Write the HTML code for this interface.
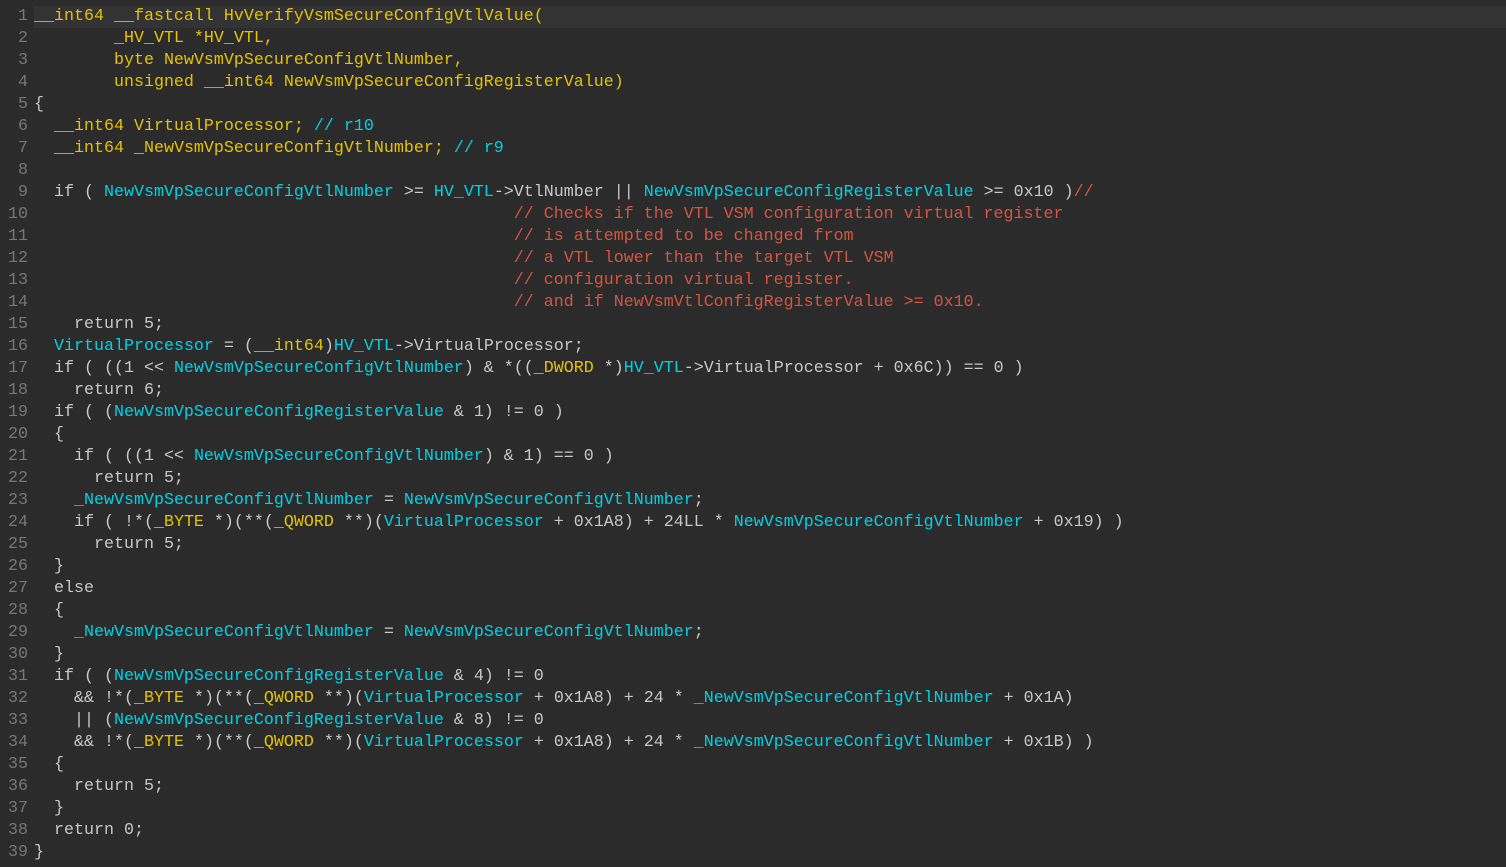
<!DOCTYPE html>
<html><head><meta charset="utf-8"><style>
html,body{margin:0;padding:0;background:#2b2b2b;width:1506px;height:867px;overflow:hidden}
#c{position:absolute;left:0;top:6px;font-family:"Liberation Mono",monospace;font-size:16.667px;line-height:22px;color:#c8c8c8}
.l{display:flex;height:22px;white-space:pre}
.n{width:28px;text-align:right;color:#777;padding-right:6px}
.t{flex:1;width:1472px;white-space:pre}
.h{background:#333333}
.y{color:#e6c300}
.c{color:#00d2e6}
.r{color:#d9533f}
</style></head><body><div id="c"><div class="l"><span class="n">1</span><span class="t h y">__int64 __fastcall HvVerifyVsmSecureConfigVtlValue(</span></div><div class="l"><span class="n">2</span><span class="t y">        _HV_VTL *HV_VTL,</span></div><div class="l"><span class="n">3</span><span class="t y">        byte NewVsmVpSecureConfigVtlNumber,</span></div><div class="l"><span class="n">4</span><span class="t y">        unsigned __int64 NewVsmVpSecureConfigRegisterValue)</span></div><div class="l"><span class="n">5</span><span class="t">{</span></div><div class="l"><span class="n">6</span><span class="t">  <span class="y">__int64 VirtualProcessor;</span> <span class="c">// r10</span></span></div><div class="l"><span class="n">7</span><span class="t">  <span class="y">__int64 _NewVsmVpSecureConfigVtlNumber;</span> <span class="c">// r9</span></span></div><div class="l"><span class="n">8</span><span class="t"></span></div><div class="l"><span class="n">9</span><span class="t">  if ( <span class="c">NewVsmVpSecureConfigVtlNumber</span> &gt;= <span class="c">HV_VTL</span>-&gt;VtlNumber || <span class="c">NewVsmVpSecureConfigRegisterValue</span> &gt;= 0x10 )<span class="r">//</span></span></div><div class="l"><span class="n">10</span><span class="t r">                                                // Checks if the VTL VSM configuration virtual register</span></div><div class="l"><span class="n">11</span><span class="t r">                                                // is attempted to be changed from</span></div><div class="l"><span class="n">12</span><span class="t r">                                                // a VTL lower than the target VTL VSM</span></div><div class="l"><span class="n">13</span><span class="t r">                                                // configuration virtual register.</span></div><div class="l"><span class="n">14</span><span class="t r">                                                // and if NewVsmVtlConfigRegisterValue &gt;= 0x10.</span></div><div class="l"><span class="n">15</span><span class="t">    return 5;</span></div><div class="l"><span class="n">16</span><span class="t">  <span class="c">VirtualProcessor</span> = (<span class="y">__int64</span>)<span class="c">HV_VTL</span>-&gt;VirtualProcessor;</span></div><div class="l"><span class="n">17</span><span class="t">  if ( ((1 &lt;&lt; <span class="c">NewVsmVpSecureConfigVtlNumber</span>) &amp; *((<span class="y">_DWORD</span> *)<span class="c">HV_VTL</span>-&gt;VirtualProcessor + 0x6C)) == 0 )</span></div><div class="l"><span class="n">18</span><span class="t">    return 6;</span></div><div class="l"><span class="n">19</span><span class="t">  if ( (<span class="c">NewVsmVpSecureConfigRegisterValue</span> &amp; 1) != 0 )</span></div><div class="l"><span class="n">20</span><span class="t">  {</span></div><div class="l"><span class="n">21</span><span class="t">    if ( ((1 &lt;&lt; <span class="c">NewVsmVpSecureConfigVtlNumber</span>) &amp; 1) == 0 )</span></div><div class="l"><span class="n">22</span><span class="t">      return 5;</span></div><div class="l"><span class="n">23</span><span class="t">    <span class="c">_NewVsmVpSecureConfigVtlNumber</span> = <span class="c">NewVsmVpSecureConfigVtlNumber</span>;</span></div><div class="l"><span class="n">24</span><span class="t">    if ( !*(<span class="y">_BYTE</span> *)(**(<span class="y">_QWORD</span> **)(<span class="c">VirtualProcessor</span> + 0x1A8) + 24LL * <span class="c">NewVsmVpSecureConfigVtlNumber</span> + 0x19) )</span></div><div class="l"><span class="n">25</span><span class="t">      return 5;</span></div><div class="l"><span class="n">26</span><span class="t">  }</span></div><div class="l"><span class="n">27</span><span class="t">  else</span></div><div class="l"><span class="n">28</span><span class="t">  {</span></div><div class="l"><span class="n">29</span><span class="t">    <span class="c">_NewVsmVpSecureConfigVtlNumber</span> = <span class="c">NewVsmVpSecureConfigVtlNumber</span>;</span></div><div class="l"><span class="n">30</span><span class="t">  }</span></div><div class="l"><span class="n">31</span><span class="t">  if ( (<span class="c">NewVsmVpSecureConfigRegisterValue</span> &amp; 4) != 0</span></div><div class="l"><span class="n">32</span><span class="t">    &amp;&amp; !*(<span class="y">_BYTE</span> *)(**(<span class="y">_QWORD</span> **)(<span class="c">VirtualProcessor</span> + 0x1A8) + 24 * <span class="c">_NewVsmVpSecureConfigVtlNumber</span> + 0x1A)</span></div><div class="l"><span class="n">33</span><span class="t">    || (<span class="c">NewVsmVpSecureConfigRegisterValue</span> &amp; 8) != 0</span></div><div class="l"><span class="n">34</span><span class="t">    &amp;&amp; !*(<span class="y">_BYTE</span> *)(**(<span class="y">_QWORD</span> **)(<span class="c">VirtualProcessor</span> + 0x1A8) + 24 * <span class="c">_NewVsmVpSecureConfigVtlNumber</span> + 0x1B) )</span></div><div class="l"><span class="n">35</span><span class="t">  {</span></div><div class="l"><span class="n">36</span><span class="t">    return 5;</span></div><div class="l"><span class="n">37</span><span class="t">  }</span></div><div class="l"><span class="n">38</span><span class="t">  return 0;</span></div><div class="l"><span class="n">39</span><span class="t">}</span></div></div></body></html>
